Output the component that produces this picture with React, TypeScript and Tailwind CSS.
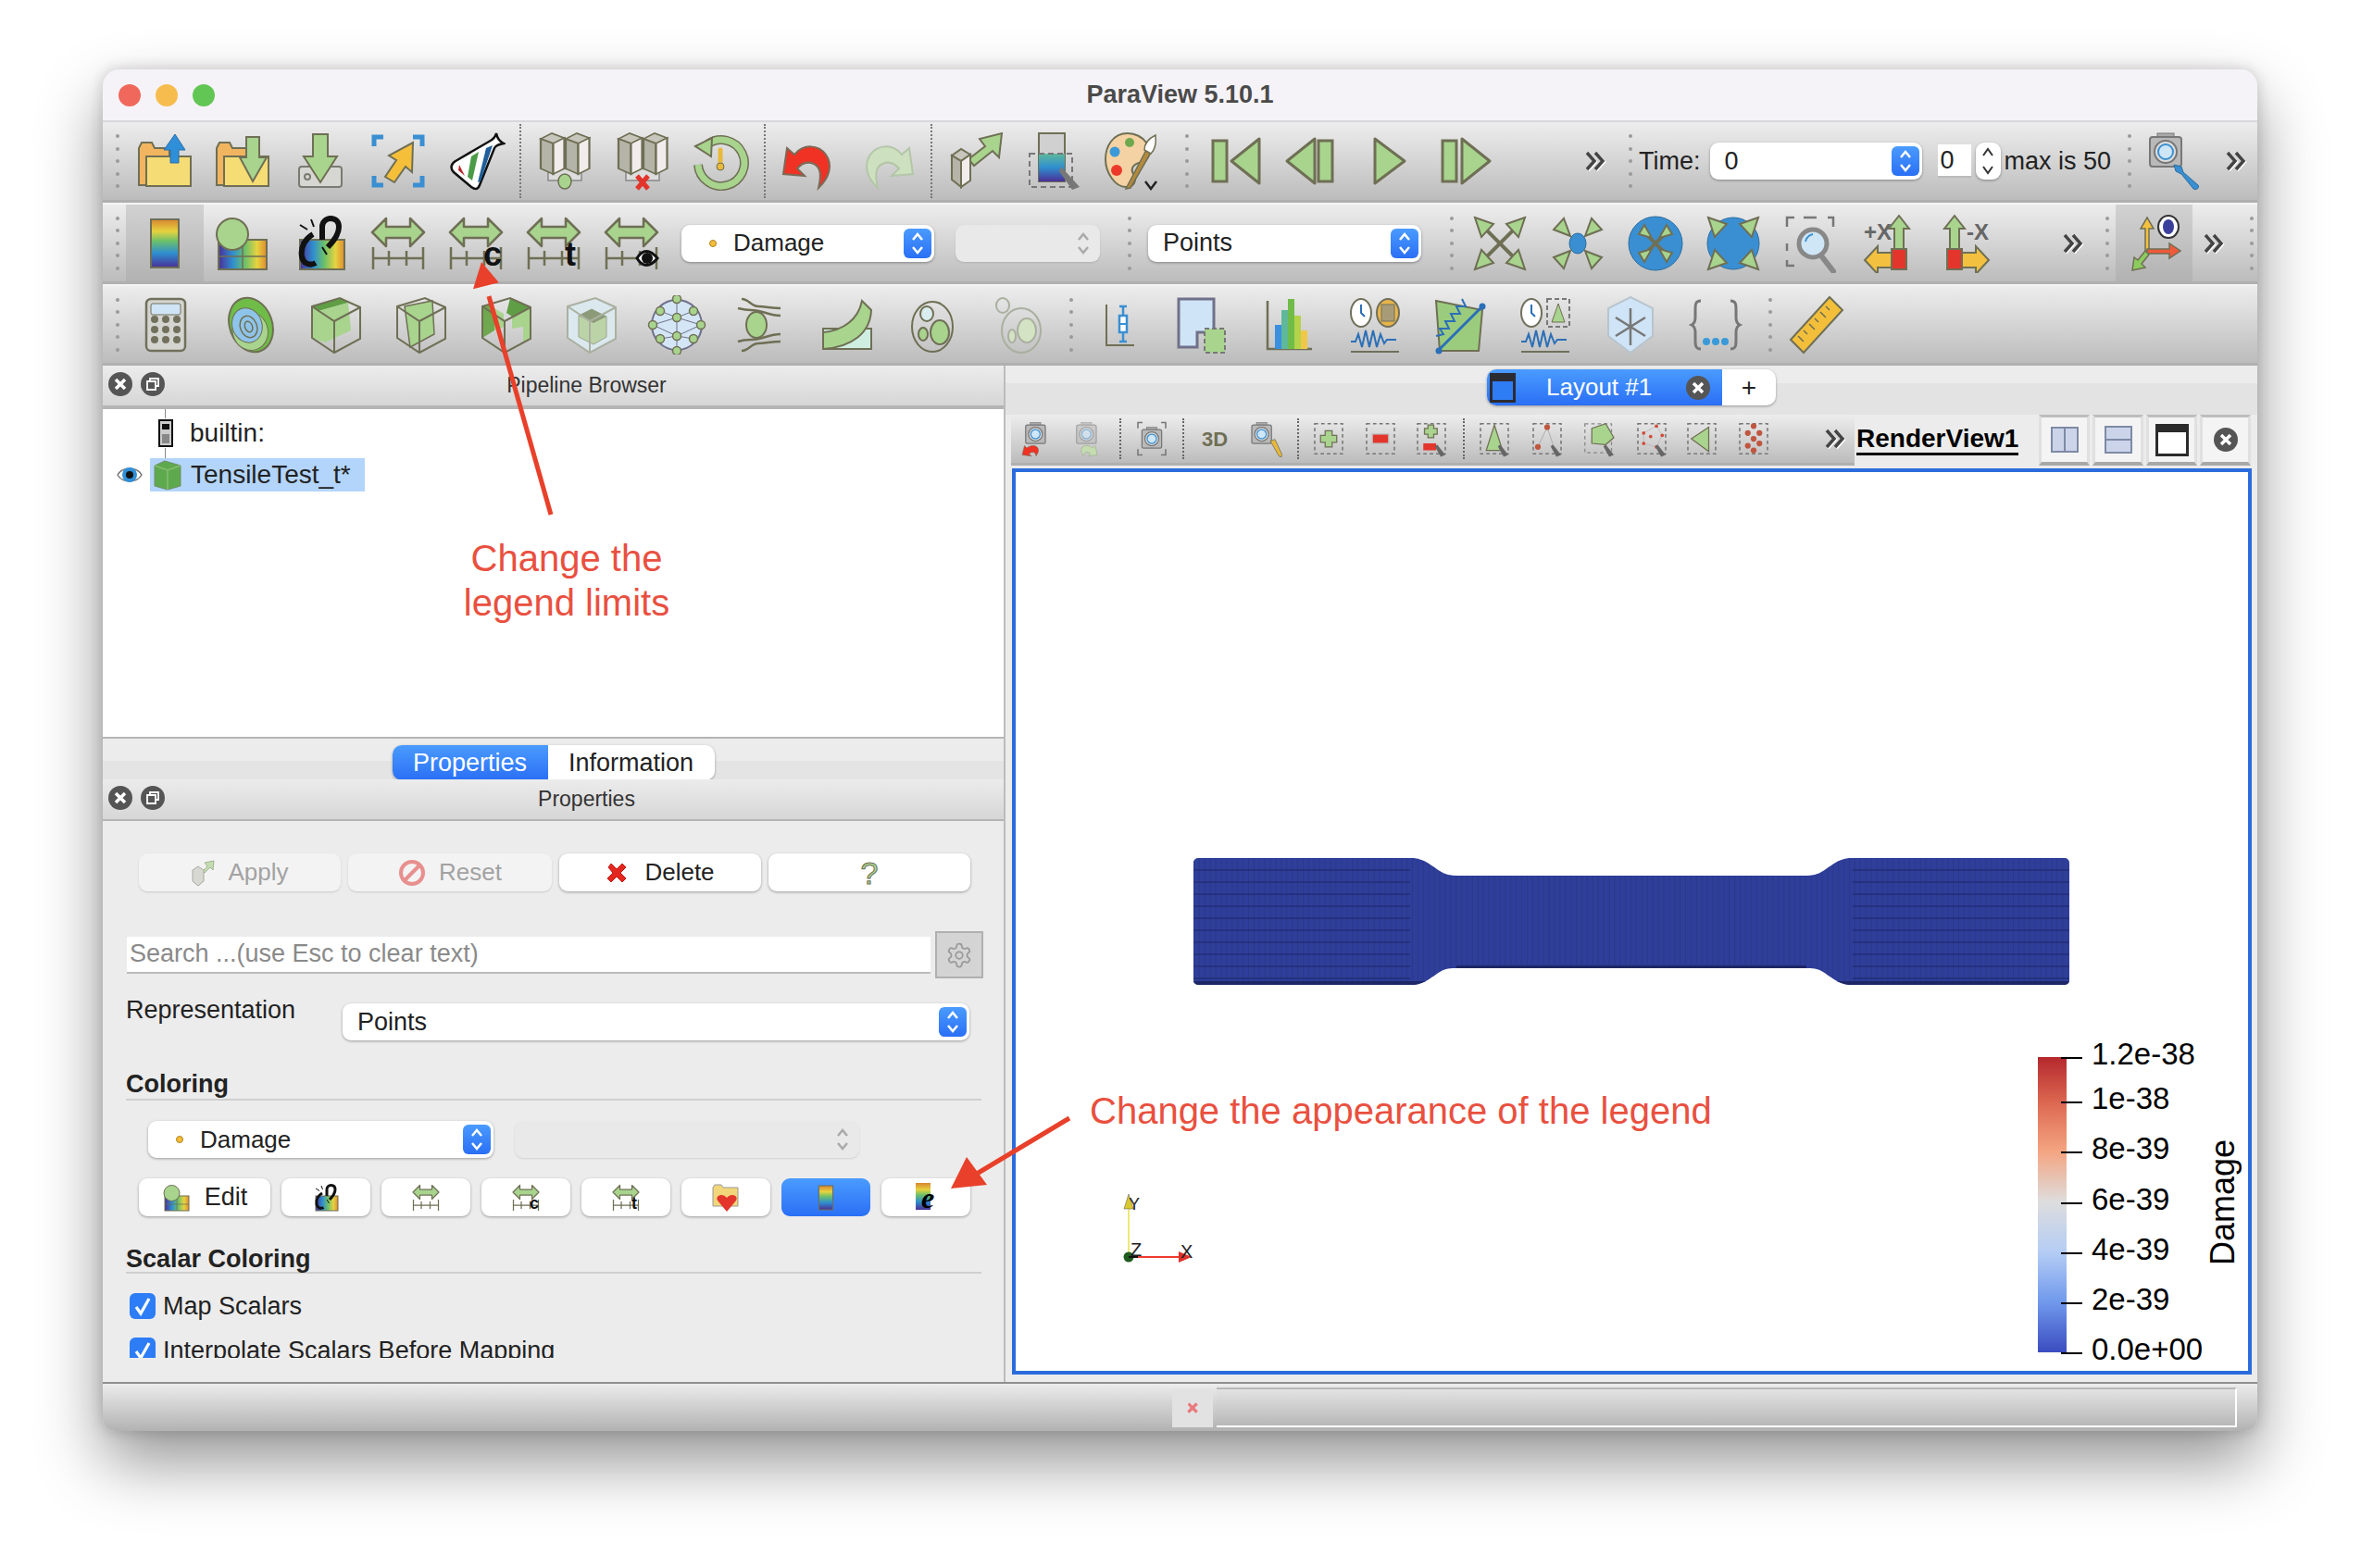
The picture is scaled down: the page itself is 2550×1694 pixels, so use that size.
import type { ReactNode } from 'react';

const ol = '#6f6f55';
const gr = '#a8d48e';
const bl = '#3a8fd2';

function Ico({ s = 64, children }: { s?: number; children: ReactNode }) {
  return (
    <svg width={s} height={s} viewBox="0 0 64 64" className="shrink-0">
      {children}
    </svg>
  );
}

type IP = { s?: number };

function Defs() {
  return (
    <svg width="0" height="0" className="absolute">
      <defs>
        <linearGradient id="rb" x1="0" y1="0" x2="0" y2="1">
          <stop offset="0" stopColor="#d9852f" />
          <stop offset="0.25" stopColor="#e6d33f" />
          <stop offset="0.45" stopColor="#6cc06a" />
          <stop offset="0.7" stopColor="#2f8fd0" />
          <stop offset="1" stopColor="#4a2f96" />
        </linearGradient>
        <linearGradient id="rh" x1="0" y1="0" x2="1" y2="0">
          <stop offset="0" stopColor="#4a2f96" />
          <stop offset="0.3" stopColor="#2f8fd0" />
          <stop offset="0.55" stopColor="#6cc06a" />
          <stop offset="0.8" stopColor="#e6d33f" />
          <stop offset="1" stopColor="#e08a30" />
        </linearGradient>
        <linearGradient id="bb" x1="0" y1="0" x2="0" y2="1">
          <stop offset="0" stopColor="#5fb89a" />
          <stop offset="0.5" stopColor="#2f8fd0" />
          <stop offset="1" stopColor="#4a2f96" />
        </linearGradient>
      </defs>
    </svg>
  );
}

// toolbar: file and server
function Folder({ up, s }: { up?: boolean; s?: number }) {
  return (
    <Ico s={s}>
      <path d="M4 58V18l3-6h11l3 6h16v40z" fill="#f2b55f" stroke={ol} strokeWidth="2" />
      <path d="M12 59V27h48v32z" fill="#f6dc74" stroke={ol} strokeWidth="2" />
      {up ? (
        <path d="M38 34V20h-7L43 3l11 17h-7v14z" fill="#2f8fd8" stroke="#2a6ea8" strokeWidth="1" />
      ) : (
        <path d="M36 6h14v22h8L43 54 29 28h7z" fill={gr} stroke={ol} strokeWidth="2" />
      )}
    </Ico>
  );
}
const OpenFile = ({ s }: IP) => <Folder up s={s} />;
const SaveFile = ({ s }: IP) => <Folder s={s} />;
function SaveData({ s }: IP) {
  return (
    <Ico s={s}>
      <rect x="9" y="38" width="46" height="22" rx="3" fill="#d6d6d2" stroke="#7a7a72" strokeWidth="2" />
      <circle cx="18" cy="49" r="3" fill="none" stroke="#7a7a72" strokeWidth="2" />
      <path d="M24 3h16v24h10L32 55 14 27h10z" fill={gr} stroke={ol} strokeWidth="2" />
    </Ico>
  );
}
function Connect({ s }: IP) {
  return (
    <Ico s={s}>
      <g fill="none" stroke={bl} strokeWidth="5">
        <path d="M6 16V6h10M58 16V6H48M6 48v10h10M58 48v10H48" />
      </g>
      <path d="M48 12l-1 32-7-6-12 17-10-6 12-18-8-5z" fill="#f5bf3a" stroke={ol} strokeWidth="2" />
    </Ico>
  );
}
function PvLogo({ s }: IP) {
  return (
    <Ico s={s}>
      <path d="M54 2c1 6 4 9 8 11-4 1-8 1-10 5L36 58c-2 5-5 5-9 2L8 44c-4-4-3-9 2-12L46 11c4-2 7-4 8-9z" fill="#fff" stroke="#111" strokeWidth="2.5" />
      <path d="M14 36l-1 6 7 6z" fill="#b8272c" />
      <path d="M27 27l-4 22 5 4 7-31z" fill="#4a9b46" />
      <path d="M43 18l-9 37 3-1 13-39z" fill="#1f5f9a" />
    </Ico>
  );
}
function Towers() {
  return (
    <g stroke={ol} strokeWidth="1.5" transform="translate(-9 0) scale(1.5 1)">
      <path d="M10 8l8-6 9 5-8 6z" fill="#c6c6bc" />
      <path d="M10 8v32l9 6V13z" fill="#b4b4a8" />
      <path d="M19 13l8-6v33l-8 6z" fill="#f2ecec" />
      <path d="M28 8l8-6 9 5-8 6z" fill="#c6c6bc" />
      <path d="M28 8v32l9 6V13z" fill="#b4b4a8" />
      <path d="M37 13l8-6v33l-8 6z" fill="#f2ecec" />
    </g>
  );
}
function ServerOn({ s }: IP) {
  return (
    <Ico s={s}>
      <path d="M14 42v11h36V42" fill="#ddd" stroke="#888" strokeWidth="1.5" />
      <Towers />
      <ellipse cx="32" cy="54" rx="7" ry="8" fill={gr} stroke={ol} strokeWidth="1.5" />
    </Ico>
  );
}
function ServerOff({ s }: IP) {
  return (
    <Ico s={s}>
      <path d="M14 42v11h36V42" fill="#ddd" stroke="#888" strokeWidth="1.5" />
      <Towers />
      <path d="M26 48l12 14M38 48L26 62" stroke="#e2352b" strokeWidth="5" />
    </Ico>
  );
}
function Recent({ s }: IP) {
  return (
    <Ico s={s}>
      <path d="M18 14A25 25 0 1 1 8 36" fill="none" stroke={ol} strokeWidth="10" />
      <path d="M18 14A25 25 0 1 1 8 36" fill="none" stroke={gr} strokeWidth="7" />
      <path d="M5 16l18-9-1 20z" fill={gr} stroke={ol} strokeWidth="2" />
      <path d="M32 20v14" stroke="#e8b93a" strokeWidth="5" strokeLinecap="round" />
      <circle cx="32" cy="38" r="4" fill="#e8b93a" stroke={ol} />
    </Ico>
  );
}
function Undo({ s }: IP) {
  return (
    <Ico s={s}>
      <path d="M4 46l4-28 8 7c10-12 26-11 34 0 7 10 5 24-8 36 3-13 3-22-5-26-7-3-13-1-18 5l8 8z" fill="#ef3224" stroke="#7c6a58" strokeWidth="2" />
    </Ico>
  );
}
function Redo({ s }: IP) {
  return (
    <Ico s={s}>
      <path d="M60 46l-4-28-8 7C38 13 22 14 14 25c-7 10-5 24 8 36-3-13-3-22 5-26 7-3 13-1 18 5l-8 8z" fill="#cde0c0" stroke="#b4c6a8" strokeWidth="2" />
    </Ico>
  );
}
function LoadState({ s }: IP) {
  return (
    <Ico s={s}>
      <path d="M24 30L42 16l-6-8 24-6-3 26-7-7-20 16z" fill={gr} stroke={ol} strokeWidth="2" />
      <g stroke={ol} strokeWidth="2">
        <path d="M6 26l10-7 10 6-10 7z" fill="#c6c6bc" />
        <path d="M6 26v26l10 8V32z" fill="#b4b4a8" />
        <path d="M16 32l10-7v28l-10 7z" fill="#f2ecec" />
      </g>
    </Ico>
  );
}
function ColorSel({ s }: IP) {
  return (
    <Ico s={s}>
      <rect x="16" y="2" width="28" height="52" fill="#d0d0d0" stroke={ol} strokeWidth="2" />
      <rect x="16" y="24" width="28" height="30" fill="url(#bb)" />
      <rect x="6" y="24" width="46" height="36" fill="none" stroke="#777" strokeWidth="2" strokeDasharray="6 4" />
      <path d="M40 38l20 22-8 3-14-20z" fill="#777" />
    </Ico>
  );
}
function Palette({ s }: IP) {
  return (
    <Ico s={s}>
      <path d="M28 2C12 2 4 16 4 30c0 14 10 30 22 30 10 0 12-8 8-14-3-5-1-10 6-12 12-2 14-12 8-22C44 6 36 2 28 2z" fill="#f4d2a4" stroke={ol} strokeWidth="2" />
      <circle cx="30" cy="12" r="5" fill="#6fa84e" />
      <circle cx="14" cy="22" r="5.5" fill="#3a9ad9" />
      <circle cx="16" cy="42" r="6" fill="#ec3a2a" />
      <path d="M48 20L26 62l5-1 22-38z" fill="#b58a3c" stroke={ol} strokeWidth="1.5" />
      <path d="M46 20c0-6 4-12 12-16 1 8 0 15-5 20z" fill="#fff" stroke={ol} strokeWidth="1.5" />
    </Ico>
  );
}

// toolbar: animation
function VcrFirst({ s }: IP) {
  return (
    <Ico s={s}>
      <rect x="10" y="10" width="15" height="44" fill={gr} stroke={ol} strokeWidth="3" />
      <path d="M60 8v48L30 32z" fill={gr} stroke={ol} strokeWidth="3" strokeLinejoin="round" />
    </Ico>
  );
}
function VcrBack({ s }: IP) {
  return (
    <Ico s={s}>
      <rect x="40" y="10" width="15" height="44" fill={gr} stroke={ol} strokeWidth="3" />
      <path d="M36 8v48L6 32z" fill={gr} stroke={ol} strokeWidth="3" strokeLinejoin="round" />
    </Ico>
  );
}
function VcrPlay({ s }: IP) {
  return (
    <Ico s={s}>
      <path d="M17 8v48l32-24z" fill={gr} stroke={ol} strokeWidth="3" strokeLinejoin="round" />
    </Ico>
  );
}
function VcrLast({ s }: IP) {
  return (
    <Ico s={s}>
      <rect x="6" y="10" width="15" height="44" fill={gr} stroke={ol} strokeWidth="3" />
      <path d="M27 8v48l30-24z" fill={gr} stroke={ol} strokeWidth="3" strokeLinejoin="round" />
    </Ico>
  );
}
function CameraShape({ x = 0, y = 0 }: { x?: number; y?: number }) {
  return (
    <g transform={`translate(${x} ${y})`}>
      <rect x="14" y="2" width="18" height="6" fill="#aaa" stroke="#777" />
      <rect x="6" y="6" width="34" height="32" rx="3" fill="#b9b9b9" stroke="#777" strokeWidth="2" />
      <circle cx="23" cy="22" r="12" fill="#ddd" stroke="#777" strokeWidth="2" />
      <circle cx="23" cy="22" r="8" fill="#cfe6f7" stroke={bl} strokeWidth="2" />
    </g>
  );
}
function CamWrench({ s }: IP) {
  return (
    <Ico s={s}>
      <CameraShape />
      <path d="M32 36l8 2 2 6 16 14c2 3-2 6-5 4L40 46l-6-3z" fill={bl} stroke="#2b6c9e" />
    </Ico>
  );
}

// toolbar: colouring
function ColorBar({ s }: IP) {
  return (
    <Ico s={s}>
      <rect x="17" y="6" width="30" height="52" fill="url(#rb)" stroke={ol} strokeWidth="2" />
    </Ico>
  );
}
function EditMap({ s }: IP) {
  return (
    <Ico s={s}>
      <rect x="6" y="28" width="52" height="32" fill="url(#rh)" stroke={ol} strokeWidth="2" />
      <path d="M6 46h52M32 28v32" stroke={ol} strokeWidth="1.5" />
      <circle cx="21" cy="22" r="17" fill={gr} stroke={ol} strokeWidth="2" />
    </Ico>
  );
}
function BrokenLink({ s }: IP) {
  return (
    <Ico s={s}>
      <rect x="10" y="28" width="48" height="32" fill="url(#rh)" stroke={ol} strokeWidth="2" />
      <path d="M34 28V14c0-5 4-9 9-9 6 0 9 4 9 9 0 8-6 16-12 22" fill="none" stroke="#111" strokeWidth="6" />
      <path d="M24 22c-7 4-14 13-12 24 1 7 8 11 15 7" fill="none" stroke="#111" strokeWidth="6" />
      <path d="M22 6l3 8M10 12l8 5M34 36l5 8" stroke="#111" strokeWidth="2" />
    </Ico>
  );
}
function Rescale({ s, mark }: IP & { mark?: ReactNode }) {
  return (
    <Ico s={s}>
      <path d="M4 20L19 5v9h26V5l15 15-15 15v-9H19v9z" fill={gr} stroke={ol} strokeWidth="2.5" strokeLinejoin="round" />
      <path d="M5 36v24M59 36v24M22 40v16M41 40v16M5 48h54" stroke={ol} strokeWidth="2.5" fill="none" />
      {mark}
    </Ico>
  );
}
const RescaleData = ({ s }: IP) => <Rescale s={s} />;
const RescaleCustom = ({ s }: IP) => (
  <Rescale s={s} mark={<text x="40" y="56" fontSize="36" fontWeight="700" fill="#111">c</text>} />
);
const RescaleTime = ({ s }: IP) => (
  <Rescale s={s} mark={<text x="44" y="56" fontSize="36" fontWeight="700" fill="#111">t</text>} />
);
const RescaleVisible = ({ s }: IP) => (
  <Rescale
    s={s}
    mark={
      <g>
        <path d="M38 48c6-10 14-10 22 0-8 10-16 10-22 0z" fill="#fff" stroke="#111" strokeWidth="3" />
        <circle cx="49" cy="48" r="6" fill="#111" />
      </g>
    }
  />
);

// toolbar: camera
function Heads({ out, r = 0 }: { out?: boolean; r?: number }) {
  const a = out
    ? ['M5 4l20 7-13 14z', 'M59 4l-20 7 13 14z', 'M5 60l20-7-13-14z', 'M59 60l-20-7 13-14z']
    : ['M24 24L6 17l11-12z', 'M40 24l18-7-11-12z', 'M24 40L6 47l11 12z', 'M40 40l18 7-11 12z'];
  return (
    <g fill={gr} stroke={ol} strokeWidth="2" transform={`rotate(${r} 32 32)`}>
      {a.map((d) => (
        <path key={d} d={d} />
      ))}
    </g>
  );
}
function ResetCam({ s }: IP) {
  return (
    <Ico s={s}>
      <path d="M12 12l40 40M52 12L12 52" stroke={ol} strokeWidth="4" />
      <Heads out />
    </Ico>
  );
}
function ZoomData({ s }: IP) {
  return (
    <Ico s={s}>
      <ellipse cx="32" cy="32" rx="9" ry="11" fill={bl} stroke="#2b6c9e" />
      <Heads />
    </Ico>
  );
}
function ZoomClosest({ s }: IP) {
  return (
    <Ico s={s}>
      <circle cx="32" cy="32" r="29" fill={bl} stroke="#2b6c9e" />
      <path d="M20 20l24 24M44 20L20 44" stroke={ol} strokeWidth="4" />
      <g fill={gr} stroke={ol} strokeWidth="2">
        <path d="M28 26L14 22l6-10zM36 26l14-4-6-10zM28 38l-14 4 6 10zM36 38l14 4-6 10z" />
      </g>
    </Ico>
  );
}
function ResetCenter({ s }: IP) {
  return (
    <Ico s={s}>
      <circle cx="32" cy="32" r="28" fill={bl} stroke="#2b6c9e" />
      <Heads out />
    </Ico>
  );
}
function Magnifier() {
  return (
    <g>
      <path d="M42 44l14 18" stroke="#888" strokeWidth="6" strokeLinecap="round" />
      <circle cx="34" cy="32" r="15" fill="#cfe6f7" stroke="#888" strokeWidth="5" />
      <path d="M26 30c1-5 4-7 8-8" fill="none" stroke={bl} strokeWidth="2" />
    </g>
  );
}
function ZoomBox({ s }: IP) {
  return (
    <Ico s={s}>
      <path d="M6 14V4h8M24 4h14M50 4h6v10M6 32v8" fill="none" stroke="#777" strokeWidth="2.5" />
      <path d="M6 50v6h8" fill="none" stroke="#777" strokeWidth="2.5" />
      <Magnifier />
    </Ico>
  );
}
function PlusX({ s, minus }: IP & { minus?: boolean }) {
  return (
    <Ico s={s}>
      {minus ? (
        <g>
          <path d="M14 42V16H8L19 2l11 14h-6v26z" fill={gr} stroke={ol} strokeWidth="2" />
          <path d="M24 42h18v-7l14 15-14 15v-7H24z" fill="#f3c13f" stroke={ol} strokeWidth="2" />
          <rect x="11" y="38" width="16" height="22" fill="#e3352b" stroke={ol} strokeWidth="2" />
          <text x="32" y="28" fontSize="24" fontWeight="700" fill="#666">-X</text>
        </g>
      ) : (
        <g>
          <path d="M38 42V16h-6L43 2l11 14h-6v26z" fill={gr} stroke={ol} strokeWidth="2" />
          <path d="M38 42H20v-7L6 50l14 15v-7h18z" fill="#f3c13f" stroke={ol} strokeWidth="2" />
          <rect x="35" y="38" width="16" height="22" fill="#e3352b" stroke={ol} strokeWidth="2" />
          <text x="5" y="28" fontSize="24" fontWeight="700" fill="#666">+X</text>
        </g>
      )}
    </Ico>
  );
}
const PosX = ({ s }: IP) => <PlusX s={s} />;
const NegX = ({ s }: IP) => <PlusX s={s} minus />;
function AxesEye({ s }: IP) {
  return (
    <Ico s={s}>
      <path d="M22 40V16h-5l7-12 7 12h-5v24z" fill="#f3c13f" stroke={ol} strokeWidth="1.5" />
      <path d="M24 38h24v-6l12 8-12 8v-5H24z" fill="#ee5a3a" stroke={ol} strokeWidth="1.5" />
      <path d="M22 40l-8 10-4-3-2 14 14-3-4-4 8-10z" fill="#8ccc5e" stroke={ol} strokeWidth="1.5" />
      <ellipse cx="47" cy="14" rx="11" ry="12" fill="#fff" stroke="#333" strokeWidth="2" />
      <ellipse cx="47" cy="14" rx="6" ry="8" fill="#3b3f9c" />
    </Ico>
  );
}

// toolbar: filters
function Calc({ s }: IP) {
  return (
    <Ico s={s}>
      <rect x="11" y="4" width="42" height="56" rx="5" fill="#d4d4d0" stroke="#70705c" strokeWidth="2.5" />
      <rect x="16" y="9" width="32" height="12" rx="2" fill="#cfe4f6" stroke="#70705c" />
      {[26, 37, 48].map((y) =>
        [20, 32, 44].map((x) => <circle key={`${x}${y}`} cx={x} cy={y} r="4" fill="#70705c" />),
      )}
    </Ico>
  );
}
function Contour({ s }: IP) {
  return (
    <Ico s={s}>
      <g transform="rotate(-20 32 32)">
        <ellipse cx="32" cy="32" rx="23" ry="30" fill="#6fbc48" stroke={ol} strokeWidth="2" />
        <ellipse cx="29" cy="38" rx="19" ry="21" fill={gr} stroke={ol} />
        <ellipse cx="28" cy="31" rx="16" ry="19" fill="#8fc4ea" stroke={ol} />
        <ellipse cx="29" cy="33" rx="9" ry="12" fill="none" stroke={ol} strokeWidth="1.5" />
        <ellipse cx="29" cy="33" rx="4" ry="6" fill="none" stroke={ol} strokeWidth="1.5" />
      </g>
    </Ico>
  );
}
function Wire({ pale }: { pale?: boolean }) {
  return (
    <path d="M6 12L36 3l22 10v34L30 62 6 46zM6 12l24 16 28-15M30 28v34" fill="none" stroke={pale ? '#aab0a0' : ol} strokeWidth="2" />
  );
}
function Clip({ s }: IP) {
  return (
    <Ico s={s}>
      <path d="M6 12L36 3l9 5-32 9z" fill="#5f9e44" />
      <path d="M6 12l7 5 32-9 3 30-28 13-14-5z" fill={gr} />
      <Wire />
    </Ico>
  );
}
function Slice({ s }: IP) {
  return (
    <Ico s={s}>
      <path d="M14 12l30-6 2 36-26 14z" fill={gr} stroke={ol} strokeWidth="1.5" />
      <Wire />
    </Ico>
  );
}
function Extract({ s }: IP) {
  return (
    <Ico s={s}>
      <path d="M6 12l10-3 3 5v24l-13 8z" fill="#6fa84e" />
      <path d="M19 14l10 6v14l-10 4z" fill={gr} />
      <path d="M36 3l22 10-20 10-6-4z" fill="#5f9e44" />
      <path d="M38 23l20-10v34l-8 4V34l-12 2z" fill={gr} />
      <Wire />
    </Ico>
  );
}
function Threshold({ s }: IP) {
  return (
    <Ico s={s}>
      <path d="M6 12L36 3l22 10v34L30 62 6 46z" fill="#dbe8ee" />
      <path d="M18 22l14-7 16 8v22l-14 8-16-8z" fill="#bcd3a8" stroke="#9aa58c" />
      <path d="M18 22l16 8 14-7-16-8z" fill="#8c9a78" />
      <Wire pale />
    </Ico>
  );
}
function Glyph({ s }: IP) {
  const pts = [[32, 4], [14, 17], [50, 17], [32, 24], [6, 32], [58, 32], [32, 44], [14, 47], [50, 47], [32, 60]];
  return (
    <Ico s={s}>
      <circle cx="32" cy="32" r="27" fill="#d4e6f6" stroke="#70708a" strokeWidth="2" />
      <path d="M32 4v56M14 17l18 7 18-7M6 32l26-8 26 8M14 47l18-3 18 3M6 32l26 12 26-12" stroke="#70708a" fill="none" />
      {pts.map(([x, y]) => (
        <circle key={`${x}-${y}`} cx={x} cy={y} r="4.5" fill={gr} stroke={ol} strokeWidth="1.5" />
      ))}
    </Ico>
  );
}
function Stream({ s }: IP) {
  return (
    <Ico s={s}>
      <ellipse cx="26" cy="32" rx="11" ry="14" fill={gr} stroke={ol} strokeWidth="2" />
      <path d="M10 4c8 0 10 8 18 8 8 0 14 2 24 2M10 60c8 0 10-8 18-8 8 0 14-2 24-2M6 14c8 2 8 2 14 2 14 0 18 6 32 6M6 50c6-2 8-2 14-2 14 0 18-6 32-6" fill="none" stroke={ol} strokeWidth="2.5" />
    </Ico>
  );
}
function Warp({ s }: IP) {
  return (
    <Ico s={s}>
      <rect x="6" y="36" width="52" height="22" fill="#cfeee2" stroke={ol} strokeWidth="2" />
      <path d="M6 40c22-2 38-14 42-34l10 10c-1 24-20 40-52 42z" fill={gr} stroke={ol} strokeWidth="2" />
    </Ico>
  );
}
function Group({ s, pale }: IP & { pale?: boolean }) {
  const c = pale ? '#aab0a0' : ol;
  return (
    <Ico s={s}>
      <ellipse cx="32" cy="34" rx="22" ry="27" fill="none" stroke={c} strokeWidth="2" />
      <ellipse cx="26" cy="20" rx="7" ry="8" fill={pale ? '#fff0' : '#d9ecee'} stroke={c} strokeWidth="2" />
      <ellipse cx="22" cy="42" rx="5" ry="7" fill={pale ? '#d4e3c4' : gr} stroke={c} strokeWidth="2" />
      <ellipse cx="40" cy="40" rx="10" ry="13" fill={pale ? '#d4e3c4' : gr} stroke={c} strokeWidth="2" />
    </Ico>
  );
}
function ExtractGroup({ s }: IP) {
  return (
    <Ico s={s}>
      <ellipse cx="36" cy="38" rx="21" ry="24" fill="none" stroke="#aab0a0" strokeWidth="2" />
      <ellipse cx="16" cy="11" rx="7" ry="8" fill="none" stroke="#aab0a0" strokeWidth="2" />
      <ellipse cx="26" cy="44" rx="4" ry="7" fill="#d4e3c4" stroke="#aab0a0" strokeWidth="2" />
      <ellipse cx="42" cy="38" rx="10" ry="13" fill="#d4e3c4" stroke="#aab0a0" strokeWidth="2" />
    </Ico>
  );
}
function Whisker({ s }: IP) {
  return (
    <Ico s={s}>
      <path d="M18 10v44h30" fill="none" stroke={ol} strokeWidth="2" />
      <path d="M32 12h8M36 12v38M32 50h8" stroke={bl} strokeWidth="2.5" />
      <rect x="32" y="22" width="8" height="18" fill="#fff" stroke={bl} strokeWidth="2.5" />
      <path d="M32 31h8" stroke={bl} strokeWidth="2" />
    </Ico>
  );
}
function SelView({ s }: IP) {
  return (
    <Ico s={s}>
      <path d="M4 4h38v36H24v16H4z" fill="#cfe4f6" stroke="#70708a" strokeWidth="3" />
      <rect x="32" y="36" width="22" height="26" fill={gr} stroke="#777" strokeWidth="2" strokeDasharray="5 3" />
    </Ico>
  );
}
function Hist({ s }: IP) {
  return (
    <Ico s={s}>
      <path d="M8 6v52h48" fill="none" stroke={ol} strokeWidth="2.5" />
      <rect x="16" y="32" width="7" height="26" fill="#3a8fe0" />
      <rect x="23" y="16" width="7" height="42" fill="#5fb89a" />
      <rect x="30" y="4" width="7" height="54" fill="#6fbc48" />
      <rect x="37" y="22" width="7" height="36" fill="#b4d24a" />
      <rect x="44" y="38" width="7" height="20" fill="#f0c848" />
    </Ico>
  );
}
function Wave() {
  return (
    <g>
      <path d="M6 50h5l3-8 4 14 4-18 4 18 4-18 4 18 4-14 4 10 3-4h10" fill="none" stroke="#2b6fb8" strokeWidth="2" />
      <path d="M6 61h52" stroke="#70705c" strokeWidth="2" />
    </g>
  );
}
function ClockFace({ x, y }: { x: number; y: number }) {
  return (
    <g>
      <ellipse cx={x} cy={y} rx="11" ry="15" fill="#fff" stroke="#70705c" strokeWidth="2" />
      <path d={`M${x} ${y - 9}v9l4 4`} fill="none" stroke="#2b6fb8" strokeWidth="2" />
    </g>
  );
}
function PlotTime({ s }: IP) {
  return (
    <Ico s={s}>
      <ClockFace x={17} y={19} />
      <ellipse cx="46" cy="19" rx="12" ry="15" fill="#e8b44a" stroke="#70705c" strokeWidth="2" />
      <rect x="39" y="10" width="14" height="18" fill="#a89c78" stroke="#70705c" />
      <Wave />
    </Ico>
  );
}
function PlotLine({ s }: IP) {
  return (
    <Ico s={s}>
      <path d="M6 6l50 10-4 44-42 0z" fill="#9bcc7e" stroke={ol} strokeWidth="2" />
      <path d="M8 60L56 12" stroke="#2b6fb8" strokeWidth="3" />
      <path d="M6 44l8-2-4-6 10 0-4-8 10 0-4-8 10 0-4-8 10 0-4-8" fill="none" stroke="#2b6fb8" strokeWidth="2" />
      <circle cx="56" cy="12" r="3.5" fill="#2b6fb8" />
      <circle cx="9" cy="60" r="3.5" fill="#2b6fb8" />
    </Ico>
  );
}
function PlotTimeSel({ s }: IP) {
  return (
    <Ico s={s}>
      <ClockFace x={17} y={19} />
      <rect x="34" y="4" width="24" height="30" fill="none" stroke="#777" strokeWidth="2" strokeDasharray="5 3" />
      <path d="M46 9l7 20H39z" fill={gr} stroke={ol} />
      <Wave />
    </Ico>
  );
}
function Freeze({ s }: IP) {
  return (
    <Ico s={s}>
      <path d="M32 2l24 12v30L32 62 8 44V14z" fill="#cfe4f6" stroke="#b8c4cc" strokeWidth="2" />
      <path d="M32 14v40M16 24l32 20M48 24L16 44" stroke="#777" strokeWidth="2.5" />
    </Ico>
  );
}
function Braces({ s }: IP) {
  return (
    <Ico s={s}>
      <path d="M16 6c-6 0-6 4-6 10v8c0 4-2 7-4 8 2 1 4 4 4 8v8c0 6 0 10 6 10M48 6c6 0 6 4 6 10v8c0 4 2 7 4 8-2 1-4 4-4 8v8c0 6 0 10-6 10" fill="none" stroke="#777" strokeWidth="3" />
      <circle cx="22" cy="50" r="4" fill="#3a9ad9" />
      <circle cx="32" cy="50" r="4" fill="#3a9ad9" />
      <circle cx="42" cy="50" r="4" fill="#3a9ad9" />
    </Ico>
  );
}
function Ruler({ s }: IP) {
  return (
    <Ico s={s}>
      <path d="M46 2l14 14L18 62 4 48z" fill="#f3bf3a" stroke={ol} strokeWidth="2" />
      <path d="M42 12l4 4M36 18l6 6M30 25l4 4M24 31l6 6M18 38l4 4M12 44l6 6" stroke={ol} strokeWidth="1.5" />
    </Ico>
  );
}

// render view toolbar, small icons
function CamUndo() {
  return (
    <Ico s={40}>
      <CameraShape x={8} y={2} />
      <path d="M8 60l4-16 4 4c6-6 20-6 20 4 0 4-2 6-4 10 0-6-6-10-12-4l4 4z" fill="#ef3224" stroke="#7c6a58" />
    </Ico>
  );
}
function CamRedo() {
  return (
    <Ico s={40}>
      <g opacity=".55">
        <CameraShape x={8} y={2} />
      </g>
      <path d="M50 60l-4-16-4 4c-6-6-20-6-20 4 0 4 2 6 4 10 0-6 6-10 12-4l-4 4z" fill="#c4dcb0" stroke="#9aac8c" />
    </Ico>
  );
}
function CamBox() {
  return (
    <Ico s={40}>
      <path d="M8 14V4h8M56 14V4h-8M8 50v10h8M56 50v10h-8" fill="none" stroke="#777" strokeWidth="2.5" />
      <CameraShape x={9} y={10} />
    </Ico>
  );
}
function CamPen() {
  return (
    <Ico s={40}>
      <CameraShape x={2} y={2} />
      <path d="M40 36l8-3 12 26-1 5-4-2z" fill="#e8b93a" stroke="#555" />
    </Ico>
  );
}
function Dash({ children }: { children: ReactNode }) {
  return (
    <Ico s={40}>
      <rect x="8" y="6" width="48" height="52" fill="none" stroke="#777" strokeWidth="2.5" strokeDasharray="6 5" />
      {children}
    </Ico>
  );
}
const Plus = ({ y = 32 }: { y?: number }) => (
  <path d={`M26 ${y - 14}h12v8h8v12h-8v8H26v-8h-8v-12h8z`} fill={gr} stroke={ol} strokeWidth="2" />
);
const Cursor = () => <path d="M42 42l14 18-8 3-10-18z" fill="#666" />;
const SelAdd = () => <Dash><Plus /></Dash>;
const SelSub = () => <Dash><rect x="18" y="24" width="28" height="16" fill="#e3352b" stroke="#bbb" strokeWidth="2" /></Dash>;
const SelTog = () => (
  <Dash>
    <path d="M26 8h10v6h6v10h-6v6H26v-6h-6V14h6z" fill={gr} stroke={ol} strokeWidth="2" />
    <rect x="18" y="40" width="22" height="12" fill="#e3352b" />
    <Cursor />
  </Dash>
);
const SelCell = () => (
  <Dash>
    <path d="M32 8l14 44H18z" fill={gr} stroke={ol} strokeWidth="2" />
    <Cursor />
  </Dash>
);
const SelPts = () => (
  <Dash>
    <path d="M32 12L16 46M32 12l10 30" stroke="#aaa" strokeWidth="1.5" />
    <circle cx="32" cy="12" r="5" fill="#c0563f" />
    <circle cx="16" cy="46" r="5" fill="#c0563f" />
    <Cursor />
  </Dash>
);
const SelBlock = () => (
  <Ico s={40}>
    <rect x="6" y="6" width="46" height="50" fill="none" stroke="#888" strokeWidth="2" strokeDasharray="6 5" />
    <path d="M18 14l24-8 14 24-14 12-24-2z" fill={gr} stroke={ol} strokeWidth="2" />
    <Cursor />
  </Ico>
);
const SelFrust = () => (
  <Dash>
    <path d="M18 22l22-12 10 16-10 20-22-6z" fill="none" stroke="#bbb" strokeWidth="1.5" />
    {[[18, 22], [40, 10], [50, 26], [40, 46], [18, 40], [30, 28]].map(([x, y]) => (
      <circle key={`${x}${y}`} cx={x} cy={y} r="3" fill="#d24a36" />
    ))}
    <Cursor />
  </Dash>
);
const SelPoly = () => (
  <Dash>
    <path d="M44 12L14 32l30 22z" fill={gr} stroke={ol} strokeWidth="2" />
  </Dash>
);
const SelMany = () => (
  <Dash>
    {[[32, 10], [22, 22], [42, 22], [32, 32], [22, 44], [42, 40], [32, 52]].map(([x, y]) => (
      <circle key={`${x}${y}`} cx={x} cy={y} r="5" fill="#c0563f" />
    ))}
  </Dash>
);

// small pieces of chrome
function Chevrons() {
  return (
    <svg width="28" height="24" viewBox="0 0 28 24" className="shrink-0">
      <path d="M5 3l8 9-8 9M14 3l8 9-8 9" fill="none" stroke="#fff" strokeWidth="4" transform="translate(0 1)" />
      <path d="M4 3l8 9-8 9M13 3l8 9-8 9" fill="none" stroke="#444" strokeWidth="3.5" />
    </svg>
  );
}
function Handle() {
  return (
    <div className="flex h-[58px] w-[12px] shrink-0 flex-col items-center justify-between">
      {[0, 1, 2, 3, 4].map((i) => (
        <span key={i} className="h-[4px] w-[4px] rounded-full bg-[#9a9a9a]" />
      ))}
    </div>
  );
}
function Sep() {
  return <div className="mx-[5px] h-[80px] w-[2px] shrink-0 border-l-2 border-dotted border-[#777]" />;
}
function Tools({ items }: { items: ((p: IP) => ReactNode)[] }) {
  return (
    <>
      {items.map((I, i) => (
        <div key={i} className="flex w-[84px] shrink-0 justify-center">
          <I />
        </div>
      ))}
    </>
  );
}
function Stepper({ on = true }: { on?: boolean }) {
  return (
    <span className={on ? 'mr-[3px] flex h-[32px] w-[30px] shrink-0 items-center justify-center rounded-md bg-[linear-gradient(#4a9bff,#2a6ff5)]' : 'mr-[3px] flex h-[32px] w-[30px] shrink-0 items-center justify-center'}>
      <svg width="16" height="26" viewBox="0 0 16 26">
        <path d="M3 9l5-6 5 6M3 17l5 6 5-6" fill="none" stroke={on ? '#fff' : '#aaa'} strokeWidth="2.5" />
      </svg>
    </span>
  );
}
function Combo({ cls, text, dot, off }: { cls: string; text?: string; dot?: boolean; off?: boolean }) {
  const base = off ? 'bg-[#e9e9e9] shadow-[0_1px_2px_rgba(0,0,0,0.12)]' : 'bg-white shadow-[0_1px_3px_rgba(0,0,0,0.35)]';
  return (
    <div className={`flex h-[40px] shrink-0 items-center rounded-[9px] text-[#222] ${dot ? 'text-[26px]' : 'text-[27px]'} ${base} ${cls}`}>
      {dot && <span className="ml-[30px] mr-[18px] h-[8px] w-[8px] rounded-full border border-[#b08020] bg-[#f3bf3a]" />}
      <span className={dot ? '' : 'ml-[16px]'}>{text}</span>
      <span className="flex-1" />
      <Stepper on={!off} />
    </div>
  );
}
function DockBtns() {
  return (
    <div className="flex items-center gap-[9px]">
      <CloseDot />
      <span className="flex h-[26px] w-[26px] items-center justify-center rounded-full bg-[#555]">
        <svg width="16" height="16" viewBox="0 0 16 16">
          <path d="M5 5V2h9v8h-3M2 5h9v9H2z" fill="none" stroke="#fff" strokeWidth="1.8" />
        </svg>
      </span>
    </div>
  );
}
function CloseDot() {
  return (
    <span className="flex h-[26px] w-[26px] shrink-0 items-center justify-center rounded-full bg-[#555]">
      <svg width="14" height="14" viewBox="0 0 14 14">
        <path d="M2 2l10 10M12 2L2 12" stroke="#fff" strokeWidth="3.5" />
      </svg>
    </span>
  );
}
function DockHead({ title }: { title: string }) {
  return (
    <div className="relative flex h-[45px] shrink-0 items-center justify-center border-b-2 border-[#b5b5b5] bg-[linear-gradient(#ececec,#d6d6d6)] pl-[72px] text-[23px] text-[#333]">
      <div className="absolute left-[6px] top-[7px]">
        <DockBtns />
      </div>
      {title}
    </div>
  );
}
function Btn({ children, cls }: { children: ReactNode; cls: string }) {
  return (
    <div className={`flex h-[41px] items-center justify-center rounded-[9px] text-[26px] ${cls}`}>{children}</div>
  );
}
const onBtn = 'bg-white text-[#222] shadow-[0_1px_3px_rgba(0,0,0,0.35)]';
const offBtn = 'bg-[#f3f3f3] text-[#a2a2a2] shadow-[0_1px_2px_rgba(0,0,0,0.15)]';

function Check() {
  return (
    <span className="flex h-[28px] w-[28px] shrink-0 items-center justify-center rounded-[6px] bg-[#2d7df6]">
      <svg width="22" height="22" viewBox="0 0 22 22">
        <path d="M4 12l5 7 9-16" fill="none" stroke="#fff" strokeWidth="3.2" />
      </svg>
    </span>
  );
}
function ViewBtn({ children }: { children: ReactNode }) {
  return (
    <div className="flex h-[55px] w-[55px] items-center justify-center border-[3px] border-b-[4px] border-[#bdbdbd] border-b-[#a8a8a8] border-x-[#e0e0e0] bg-[#f4f4f4]">
      {children}
    </div>
  );
}
function TbSep() {
  return <div className="h-[44px] shrink-0 border-l-2 border-dotted border-[#666]" />;
}

const legend = [
  { label: '1.2e-38', y: 0 },
  { label: '1e-38', y: 48 },
  { label: '8e-39', y: 102 },
  { label: '6e-39', y: 157 },
  { label: '4e-39', y: 211 },
  { label: '2e-39', y: 265 },
  { label: '0.0e+00', y: 319 },
];

function Specimen() {
  const rows = Array.from({ length: 10 }, (_, i) => i * 13);
  const cols = Array.from({ length: 160 }, (_, i) => i * 5.9);
  return (
    <svg width="946" height="137" viewBox="0 0 946 137">
      <defs>
        <clipPath id="dog">
          <path d="M5 0H238C250 1 258 9 266 14C272 18 278 19 284 19H662C668 19 674 18 680 14C688 9 696 1 708 0H941a5 5 0 0 1 5 5V132a5 5 0 0 1-5 5H708C696 136 688 128 680 123C674 119 668 119 662 119H284C278 119 272 119 266 123C258 128 250 136 238 137H5a5 5 0 0 1-5-5V5a5 5 0 0 1 5-5z" />
        </clipPath>
      </defs>
      <g clipPath="url(#dog)">
        <rect width="946" height="137" fill="#2f3e99" />
        {cols.map((x) => (
          <rect key={x} x={x} width="1" height="137" fill="#26337f" opacity=".45" />
        ))}
        {rows.map((y) => (
          <g key={y}>
            <rect x="0" y={y + 12} width="234" height="2" fill="#232e78" opacity=".75" />
            <rect x="712" y={y + 12} width="234" height="2" fill="#232e78" opacity=".75" />
          </g>
        ))}
        <rect x="0" y="133" width="946" height="4" fill="#1e2766" />
        <rect x="284" y="116" width="378" height="3" fill="#1e2766" />
      </g>
    </svg>
  );
}

export default function App() {
  return (
    <div className="relative h-[1694px] w-[2550px] overflow-hidden bg-white pl-[111px] pt-[75px] font-['Liberation_Sans',sans-serif]">
      <Defs />
      <div className="flex h-[1471px] w-[2327px] flex-col overflow-hidden rounded-t-[18px] rounded-b-[14px] bg-[#ececec] shadow-[0_34px_70px_rgba(0,0,0,0.42),0_0_16px_rgba(0,0,0,0.18)]">
        {/* title bar */}
        <div className="relative flex h-[57px] shrink-0 items-center justify-center border-b-2 border-[#d8d6da] bg-[#f6f3f8] text-[27px] font-bold text-[#4a4a4a]">
          <div className="absolute left-[17px] top-[16px] flex gap-[16px]">
            <span className="h-[24px] w-[24px] rounded-full bg-[#f0685c]" />
            <span className="h-[24px] w-[24px] rounded-full bg-[#f6bd4e]" />
            <span className="h-[24px] w-[24px] rounded-full bg-[#62c654]" />
          </div>
          ParaView 5.10.1
        </div>

        {/* toolbars */}
        <div className="relative flex h-[87px] shrink-0 items-center border-b-[3px] border-[#b0b0b0] bg-[linear-gradient(#ededed,#bcbcbc)] pl-[10px] text-[27px] text-[#222]">
          <Handle />
          <div className="ml-[3px] flex shrink-0">
            <Tools items={[OpenFile, SaveFile, SaveData, Connect, PvLogo]} />
          </div>
          <Sep />
          <Tools items={[ServerOn, ServerOff, Recent]} />
          <Sep />
          <Tools items={[Undo, Redo]} />
          <Sep />
          <Tools items={[LoadState, ColorSel, Palette]} />
          <svg width="18" height="14" viewBox="0 0 18 14" className="-ml-[30px] mr-[24px] mt-[52px] shrink-0">
            <path d="M3 3l6 8 6-8" fill="none" stroke="#222" strokeWidth="2.5" />
          </svg>
          <Handle />
          <div className="ml-[2px] flex shrink-0">
            <Tools items={[VcrFirst, VcrBack, VcrPlay, VcrLast]} />
          </div>
          <div className="ml-[84px]">
            <Chevrons />
          </div>
          <div className="ml-[17px]">
            <Handle />
          </div>
          <span className="ml-[3px]">Time:</span>
          <div className="ml-[10px] flex h-[40px] w-[229px] shrink-0 items-center rounded-[9px] bg-white shadow-[0_1px_3px_rgba(0,0,0,0.35)]">
            <span className="ml-[16px] flex-1">0</span>
            <Stepper />
          </div>
          <div className="ml-[17px] flex h-[36px] w-[36px] shrink-0 items-center border-b-2 border-[#bbb] bg-white pl-[3px]">0</div>
          <div className="ml-[5px] flex h-[40px] w-[27px] shrink-0 flex-col items-center justify-center rounded-[9px] bg-white shadow-[0_1px_3px_rgba(0,0,0,0.35)]">
            <svg width="14" height="32" viewBox="0 0 14 32">
              <path d="M2 10l5-7 5 7M2 22l5 7 5-7" fill="none" stroke="#333" strokeWidth="2" />
            </svg>
          </div>
          <span className="ml-[4px] whitespace-nowrap">max is 50</span>
          <div className="ml-[14px]">
            <Handle />
          </div>
          <div className="ml-[10px]">
            <CamWrench />
          </div>
          <div className="ml-[22px]">
            <Chevrons />
          </div>
        </div>

        <div className="flex h-[88px] shrink-0 items-stretch border-b-[3px] border-t-2 border-b-[#b0b0b0] border-t-[#f4f4f4] bg-[linear-gradient(#ededed,#bcbcbc)] pl-[10px] text-[26px] text-[#222]">
          <div className="flex shrink-0 items-center">
            <Handle />
          </div>
          <div className="ml-[3px] flex w-[84px] shrink-0 items-center justify-center bg-[linear-gradient(#d2d2d2,#b2b2b2)]">
            <ColorBar />
          </div>
          <div className="flex shrink-0 items-center">
            <Tools items={[EditMap, BrokenLink, RescaleData, RescaleCustom, RescaleTime, RescaleVisible]} />
            <Combo cls="ml-[12px] w-[273px]" text="Damage" dot />
            <Combo cls="ml-[23px] w-[156px]" off />
            <div className="ml-[26px]">
              <Handle />
            </div>
            <Combo cls="ml-[14px] w-[295px]" text="Points" />
            <div className="ml-[27px] mr-[4px]">
              <Handle />
            </div>
            <Tools items={[ResetCam, ZoomData, ZoomClosest, ResetCenter, ZoomBox, PosX, NegX]} />
            <div className="ml-[60px]">
              <Chevrons />
            </div>
            <div className="ml-[16px]">
              <Handle />
            </div>
          </div>
          <div className="ml-[3px] flex w-[83px] shrink-0 items-center justify-center bg-[linear-gradient(#d2d2d2,#b2b2b2)]">
            <AxesEye />
          </div>
          <div className="flex shrink-0 items-center">
            <div className="ml-[10px]">
              <Chevrons />
            </div>
            <div className="ml-[20px]">
              <Handle />
            </div>
          </div>
        </div>

        <div className="flex h-[88px] shrink-0 items-center gap-0 border-b-[3px] border-t-2 border-b-[#b0b0b0] border-t-[#f4f4f4] bg-[linear-gradient(#ededed,#bcbcbc)] pl-[10px]">
          <Handle />
          {[Calc, Contour, Clip, Slice, Extract, Threshold, Glyph, Stream, Warp, Group, ExtractGroup].map((I, i) => (
            <div key={i} className="flex w-[92px] shrink-0 justify-center">
              <I />
            </div>
          ))}
          <div className="ml-[6px]">
            <Handle />
          </div>
          {[Whisker, SelView, Hist, PlotTime, PlotLine, PlotTimeSel, Freeze, Braces].map((I, i) => (
            <div key={i} className="flex w-[92px] shrink-0 justify-center">
              <I />
            </div>
          ))}
          <div className="ml-[7px]">
            <Handle />
          </div>
          <div className="ml-[12px]">
            <Ruler />
          </div>
        </div>

        {/* main area */}
        <div className="flex min-h-0 flex-1">
          {/* left docks */}
          <div className="flex w-[975px] shrink-0 flex-col border-r-2 border-[#bcbcbc] text-[27px] text-[#222]">
            <DockHead title="Pipeline Browser" />
            <div className="h-[358px] shrink-0 border-y-2 border-[#b5b5b5] bg-white">
              <div className="ml-[67px] h-[10px] w-[1px] bg-[#888]" />
              <div className="flex h-[32px] items-center">
                <svg width="16" height="30" viewBox="0 0 16 30" className="ml-[60px] shrink-0">
                  <rect x="1" y="1" width="14" height="28" fill="#ccc" stroke="#111" strokeWidth="2" />
                  <rect x="4" y="5" width="8" height="6" fill="#111" />
                  <rect x="4" y="16" width="8" height="10" fill="#888" />
                </svg>
                <span className="ml-[18px] text-[28px]">builtin:</span>
              </div>
              <div className="ml-[67px] h-[11px] w-[1px] bg-[#888]" />
              <div className="flex h-[36px] items-center">
                <svg width="28" height="28" viewBox="0 0 28 28" className="ml-[15px] shrink-0">
                  <path d="M1 14C6 5 22 5 27 14 22 23 6 23 1 14z" fill="#fff" stroke="#777" strokeWidth="1.5" />
                  <circle cx="14" cy="14" r="8" fill="#2f8fd8" />
                  <circle cx="14" cy="14" r="4" fill="#111" />
                </svg>
                <div className="ml-[8px] flex h-[36px] w-[232px] items-center bg-[#b3d5fb]">
                  <svg width="34" height="34" viewBox="0 0 34 34" className="ml-[2px] shrink-0">
                    <path d="M3 7L14 2l17 5v22l-14 4-14-4z" fill="#5ea94d" stroke="#6f8f66" />
                    <path d="M3 7l14 5 14-5M17 12v21" fill="none" stroke="#86bd72" strokeWidth="1.5" />
                  </svg>
                  <span className="ml-[8px] whitespace-nowrap text-[28px]">TensileTest_t*</span>
                </div>
              </div>
            </div>
            <div className="flex h-[44px] shrink-0 justify-center bg-[linear-gradient(#ececec_24px,#e4e4e4_24px)] pt-[7px]">
              <div className="-mr-[114px] flex h-[38px] w-[348px] overflow-hidden rounded-t-[10px] rounded-b-[10px] bg-white shadow-[0_1px_3px_rgba(0,0,0,0.35)]">
                <div className="flex w-[168px] items-center justify-center bg-[linear-gradient(#4a9bff,#2a6ff5)] text-white">Properties</div>
                <div className="flex flex-1 items-center justify-center">Information</div>
              </div>
              <div className="w-[114px]" />
            </div>
            <DockHead title="Properties" />
            <div className="h-[580px] shrink-0 overflow-hidden pl-[25px]">
              <div className="ml-[14px] mt-[35px] flex gap-[8px]">
                <Btn cls={`w-[218px] gap-[14px] bg-[#e4e4e4] ${offBtn}`}>
                  <svg width="26" height="30" viewBox="0 0 26 30">
                    <path d="M12 14l6-6-3-4 10-2-1 10-3-3-6 6z" fill="#c4dcb0" stroke="#a4b494" />
                    <path d="M2 12l6-4 6 4v12l-6 5-6-5z" fill="#d8d8d2" stroke="#a8a8a0" />
                  </svg>
                  Apply
                </Btn>
                <Btn cls={`w-[220px] gap-[14px] ${offBtn}`}>
                  <svg width="30" height="30" viewBox="0 0 30 30">
                    <circle cx="15" cy="15" r="12" fill="none" stroke="#e88f8f" strokeWidth="4" />
                    <path d="M7 23L23 7" stroke="#e88f8f" strokeWidth="4" />
                  </svg>
                  Reset
                </Btn>
                <Btn cls={`w-[218px] gap-[18px] ${onBtn}`}>
                  <svg width="24" height="24" viewBox="0 0 24 24">
                    <path d="M3 6l3-4 6 6 6-6 4 4-6 6 6 6-4 4-6-6-6 6-4-4 6-6z" fill="#e3261e" stroke="#c01c16" />
                  </svg>
                  Delete
                </Btn>
                <Btn cls={`w-[218px] ${onBtn}`}>
                  <span className="text-[34px] leading-none text-[#a8d48e] [-webkit-text-stroke:1px_#6f6f55]">?</span>
                </Btn>
              </div>
              <div className="ml-[1px] mt-[43px] flex items-center gap-[5px]">
                <div className="flex h-[40px] w-[868px] items-center border-b-2 border-[#bbb] bg-white pl-[3px] text-[#8a8a8a]">
                  Search ...(use Esc to clear text)
                </div>
                <div className="flex h-[51px] w-[52px] items-center justify-center border-2 border-[#b0b0b0] bg-[#d4d4d4]">
                  <svg width="30" height="30" viewBox="0 0 24 24" fill="none" stroke="#999" strokeWidth="1.4">
                    <path d="M12.2 2h-.4a2 2 0 0 0-2 2v.2a2 2 0 0 1-1 1.7l-.4.3a2 2 0 0 1-2 0l-.2-.1a2 2 0 0 0-2.7.7l-.2.4a2 2 0 0 0 .7 2.7l.2.1a2 2 0 0 1 1 1.7v.6a2 2 0 0 1-1 1.7l-.2.1a2 2 0 0 0-.7 2.7l.2.4a2 2 0 0 0 2.7.7l.2-.1a2 2 0 0 1 2 0l.4.3a2 2 0 0 1 1 1.7v.2a2 2 0 0 0 2 2h.4a2 2 0 0 0 2-2v-.2a2 2 0 0 1 1-1.7l.4-.3a2 2 0 0 1 2 0l.2.1a2 2 0 0 0 2.7-.7l.2-.4a2 2 0 0 0-.7-2.7l-.2-.1a2 2 0 0 1-1-1.7v-.6a2 2 0 0 1 1-1.7l.2-.1a2 2 0 0 0 .7-2.7l-.2-.4a2 2 0 0 0-2.7-.7l-.2.1a2 2 0 0 1-2 0l-.4-.3a2 2 0 0 1-1-1.7V4a2 2 0 0 0-2-2z" />
                    <circle cx="12" cy="12" r="3" />
                  </svg>
                </div>
              </div>
              <div className="mt-[27px] flex">
                <span className="-mt-[8px] h-[30px] w-[234px] leading-[30px]">Representation</span>
                <Combo cls="w-[677px]" text="Points" />
              </div>
              <div className="mt-[32px] h-[33px] w-[924px] border-b-2 border-[#cfcfcf] text-[27px] font-bold leading-[30px]">Coloring</div>
              <div className="ml-[24px] mt-[22px] flex gap-[23px]">
                <Combo cls="w-[373px]" text="Damage" dot />
                <Combo cls="w-[372px]" off />
              </div>
              <div className="ml-[14px] mt-[22px] flex gap-[12px]">
                <Btn cls={`w-[142px] gap-[14px] text-[27px] ${onBtn}`}>
                  <EditMap s={32} />
                  Edit
                </Btn>
                <Btn cls={`w-[96px] ${onBtn}`}><BrokenLink s={32} /></Btn>
                <Btn cls={`w-[96px] ${onBtn}`}><RescaleData s={32} /></Btn>
                <Btn cls={`w-[96px] ${onBtn}`}><RescaleCustom s={32} /></Btn>
                <Btn cls={`w-[96px] ${onBtn}`}><RescaleTime s={32} /></Btn>
                <Btn cls={`w-[96px] ${onBtn}`}>
                  <svg width="34" height="34" viewBox="0 0 34 34">
                    <path d="M3 26V6l2-3h7l2 3h16v20z" fill="#f2d67a" stroke="#999" />
                    <path d="M18 32L8 20c-3-5 5-9 10-3 5-6 13-2 10 3z" fill="#e3352b" />
                  </svg>
                </Btn>
                <Btn cls="w-[96px] bg-[linear-gradient(#4a9bff,#2a6ff5)]"><ColorBar s={32} /></Btn>
                <Btn cls={`relative w-[96px] ${onBtn}`}>
                  <svg width="34" height="40" viewBox="0 0 34 40">
                    <rect x="6" y="4" width="16" height="29" fill="url(#rb)" />
                    <text x="12" y="31" fontSize="32" fontWeight="700" fontStyle="italic" fill="#000" fontFamily="Liberation Serif">e</text>
                  </svg>
                </Btn>
              </div>
              <div className="mt-[31px] h-[31px] w-[924px] border-b-2 border-[#cfcfcf] text-[27px] font-bold leading-[30px]">Scalar Coloring</div>
              <div className="ml-[4px] mt-[20px] flex h-[30px] items-center gap-[8px]">
                <Check />
                Map Scalars
              </div>
              <div className="ml-[4px] mt-[18px] flex h-[30px] items-center gap-[8px]">
                <Check />
                Interpolate Scalars Before Mapping
              </div>
            </div>
          </div>

          {/* render view */}
          <div className="flex min-w-0 flex-1 flex-col pl-[6px] text-[25px] text-[#222]">
            <div className="-ml-[6px] flex h-[53px] shrink-0 justify-center bg-[linear-gradient(#ececec_19px,#e3e3e3_19px)] pt-[4px]">
              <div className="flex h-[39px] w-[312px] overflow-hidden rounded-[10px] bg-white shadow-[0_1px_3px_rgba(0,0,0,0.35)]">
                <div className="flex w-[254px] items-center bg-[linear-gradient(#4a9bff,#2a6ff5)] text-white">
                  <svg width="28" height="32" viewBox="0 0 28 32" className="ml-[3px] shrink-0">
                    <rect x="0" y="0" width="28" height="32" fill="#2b2b33" />
                    <rect x="3" y="9" width="22" height="20" fill="#2f7df5" />
                  </svg>
                  <span className="ml-[33px] flex-1 text-[26px]">Layout #1</span>
                  <span className="mr-[13px]">
                    <CloseDot />
                  </span>
                </div>
                <div className="flex flex-1 items-center justify-center text-[28px]">+</div>
              </div>
            </div>
            <div className="flex h-[55px] shrink-0 items-center">
              <div className="flex h-[55px] w-[911px] shrink-0 items-center border-b-[3px] border-[#b0b0b0] bg-[linear-gradient(#ededed,#bcbcbc)]">
                <div className="flex w-[54px] justify-center"><CamUndo /></div>
                <div className="flex w-[56px] justify-center"><CamRedo /></div>
                <div className="ml-[7px]"><TbSep /></div>
                <div className="flex w-[66px] justify-center"><CamBox /></div>
                <TbSep />
                <div className="flex w-[66px] justify-center text-[22px] font-bold text-[#6f6f55]">3D</div>
                <div className="flex w-[44px] justify-center"><CamPen /></div>
                <div className="ml-[12px]"><TbSep /></div>
                <div className="flex w-[64px] justify-center"><SelAdd /></div>
                <div className="flex w-[48px] justify-center"><SelSub /></div>
                <div className="flex w-[62px] justify-center"><SelTog /></div>
                <div className="ml-[3px]"><TbSep /></div>
                <div className="flex w-[64px] justify-center"><SelCell /></div>
                <div className="flex w-[50px] justify-center"><SelPts /></div>
                <div className="flex w-[64px] justify-center"><SelBlock /></div>
                <div className="flex w-[48px] justify-center"><SelFrust /></div>
                <div className="flex w-[60px] justify-center"><SelPoly /></div>
                <div className="flex w-[52px] justify-center"><SelMany /></div>
                <div className="ml-[49px]"><Chevrons /></div>
              </div>
              <span className="ml-[2px] border-b-[3px] border-black text-[28px] font-bold leading-[30px] text-black">RenderView1</span>
              <span className="flex-1" />
              <div className="mr-[7px] flex gap-[3px]">
                <ViewBtn>
                  <span className="flex h-[28px] w-[30px] border-2 border-[#7d8aa5] bg-[#ccd4ea]">
                    <span className="ml-[12px] w-[2px] bg-[#7d8aa5]" />
                  </span>
                </ViewBtn>
                <ViewBtn>
                  <span className="flex h-[30px] w-[30px] items-center border-2 border-[#7d8aa5] bg-[#ccd4ea]">
                    <span className="h-[2px] w-full bg-[#7d8aa5]" />
                  </span>
                </ViewBtn>
                <ViewBtn>
                  <span className="h-[35px] w-[36px] border-[3px] border-t-[9px] border-[#2b2b2b] bg-white" />
                </ViewBtn>
                <ViewBtn>
                  <CloseDot />
                </ViewBtn>
              </div>
            </div>
            <div className="relative ml-[1px] mr-[6px] mt-[3px] h-[979px] shrink-0 border-4 border-[#2b6cdc] bg-white">
              <div className="absolute left-[192px] top-[417px]">
                <Specimen />
              </div>
              {/* axes widget */}
              <svg width="110" height="90" viewBox="0 0 110 90" className="absolute left-[110px] top-[780px]">
                <path d="M12 68V8" stroke="#e8e04a" strokeWidth="1.5" />
                <path d="M12 0l5 16H7z" fill="#d9c92f" stroke="#555" strokeWidth=".5" />
                <path d="M12 68h62" stroke="#f03a2e" strokeWidth="2" />
                <path d="M80 68l-14-6v12z" fill="#e0302a" />
                <circle cx="12" cy="68" r="5.5" fill="#1d5c1d" />
                <path d="M12 68h10" stroke="#111" strokeWidth="2" />
              </svg>
              <span className="absolute left-[122px] top-[780px] text-[18px] leading-[22px]">Y</span>
              <span className="absolute left-[124px] top-[828px] text-[20px] leading-[24px]">Z</span>
              <span className="absolute left-[178px] top-[830px] text-[20px] leading-[24px]">X</span>

              {/* colour legend */}
              <div className="absolute left-[1104px] top-[632px] h-[319px] w-[31px] bg-[linear-gradient(#b5282d,#dd6a52_16%,#f4a582_32%,#dddddd_49%,#b5cdf5_66%,#7099ec_83%,#3b4cc0)]" />
              {legend.map((t) => (
                <div key={t.label} className="absolute left-[1129px] h-0" style={{ top: 632 + t.y }}>
                  <span className="absolute left-0 top-0 h-[2px] w-[23px] bg-black" />
                  <span className="absolute left-[33px] top-[-21px] whitespace-nowrap text-[33px] leading-[36px] text-black">{t.label}</span>
                </div>
              ))}
              <span className="absolute left-[1286px] top-[721px] rotate-180 whitespace-nowrap text-[36px] leading-[36px] text-black [writing-mode:vertical-rl]">
                Damage
              </span>
            </div>
            <div className="flex-1" />
          </div>
        </div>

        {/* status bar */}
        <div className="flex h-[53px] shrink-0 items-center border-t-2 border-[#8f8f8f] bg-[linear-gradient(#ececec,#b2b2b2)] pl-[1155px]">
          <div className="flex h-[42px] w-[44px] items-center justify-center bg-[#e2e2e2]">
            <svg width="14" height="16" viewBox="0 0 24 24">
              <path d="M3 6l3-4 6 6 6-6 4 4-6 6 6 6-4 4-6-6-6 6-4-4 6-6z" fill="#e9787c" />
            </svg>
          </div>
          <div className="ml-[4px] h-[43px] w-[1102px] border-b-2 border-r-2 border-t-2 border-b-white border-r-white border-t-[#b8b8b8] bg-[linear-gradient(#e2e2e2,#b8b8b8)]" />
        </div>
      </div>

      {/* annotations */}
      <div className="absolute left-[412px] top-[579px] w-[400px] text-center text-[40px] leading-[48px] text-[#e9503f]">
        Change the
        <br />
        legend limits
      </div>
      <div className="absolute left-[1177px] top-[1176px] text-[40px] leading-[48px] text-[#e9503f]">
        Change the appearance of the legend
      </div>
      <svg width="2550" height="1694" viewBox="0 0 2550 1694" className="pointer-events-none absolute left-0 top-0">
        <path d="M595 556L528 320" stroke="#e8402a" strokeWidth="5" />
        <path d="M520 283L538 306 510 312z" fill="#e8402a" transform="rotate(-2 520 283)" />
        <path d="M1155 1208L1055 1268" stroke="#e8402a" strokeWidth="5" />
        <path d="M1027 1284L1044 1250 1066 1280z" fill="#e8402a" />
      </svg>
    </div>
  );
}
